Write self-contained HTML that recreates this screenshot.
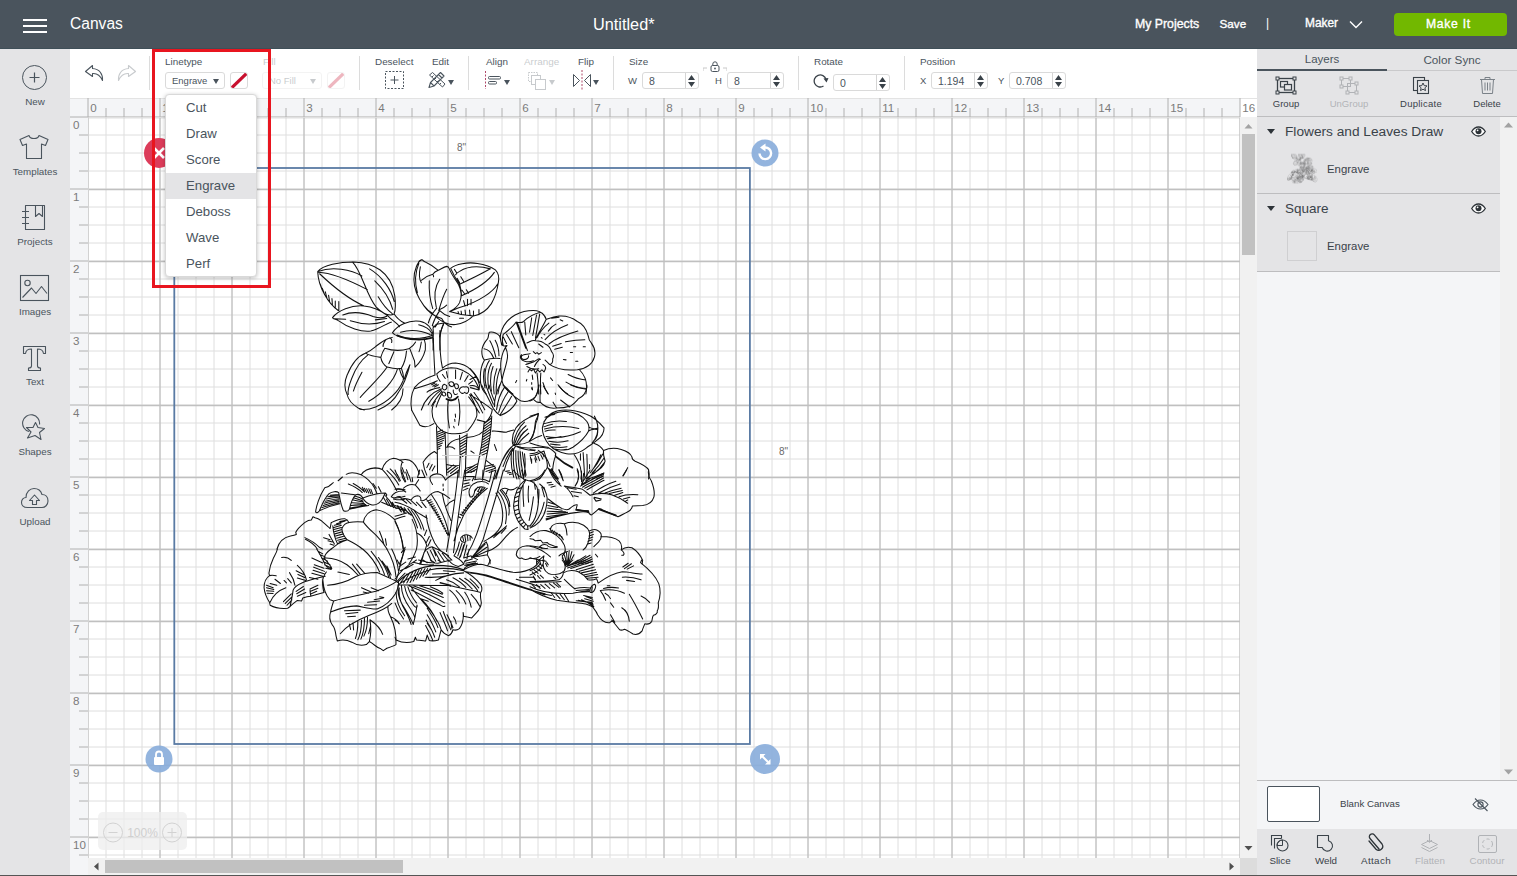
<!DOCTYPE html>
<html lang="en">
<head>
<meta charset="utf-8">
<title>Canvas</title>
<style>
*{box-sizing:border-box;margin:0;padding:0}
html,body{width:1517px;height:876px;overflow:hidden;background:#fff}
body{position:relative;font-family:"Liberation Sans",Arial,sans-serif;color:#3f4850;font-size:11px}
.a{position:absolute}
.t{position:absolute;white-space:nowrap;line-height:1}
.c{transform:translateX(-50%)}
.md{-webkit-text-stroke:.35px #fff}
#topbar{left:0;top:0;width:1517px;height:49px;background:#4a545d;border-bottom:1px solid #3f4f58}
#topbar .t{color:#fff}
#side{left:0;top:49px;width:70px;height:827px;background:#e4e4e6}
#side .t{font-size:10.5px;color:#4a545d;left:35px}
#toolbar{left:70px;top:49px;width:1187px;height:49px;background:#fff}
.lbl{font-size:9.9px;color:#4a545d;top:57px}
.dim{opacity:.3}
.sep{position:absolute;top:56px;width:1px;height:34px;background:#dcdcdc}
.inp{position:absolute;height:17px;border:1px solid #dadada;border-radius:3px;background:#fff;overflow:hidden}
.inp .v{position:absolute;left:6px;top:3px;font-size:10.5px;line-height:1;color:#4a545d}
.inp .s{position:absolute;right:12px;top:0;width:1px;height:15px;background:#d4d4d4}
.inp svg{position:absolute;right:3px;top:2px}
#rpanel{left:1257px;top:49px;width:260px;height:827px;background:#f4f5f7}
</style>
</head>
<body>
<!-- TOP BAR -->
<div id="topbar" class="a">
  <svg class="a" style="left:23px;top:18px" width="24" height="16" viewBox="0 0 24 16"><path d="M0 2h24M0 8h24M0 14h24" stroke="#fff" stroke-width="2.2"/></svg>
  <div class="t" id="tx_canvas" style="left:70px;top:16px;font-size:15.6px">Canvas</div>
  <div class="t" id="tx_untitled" style="left:593px;top:15.5px;font-size:16.3px">Untitled*</div>
  <div class="t md" id="tx_myproj" style="left:1135px;top:17.5px;font-size:12.3px">My Projects</div>
  <div class="t" id="tx_save" style="left:1219.500px;top:18px;font-size:11.7px;-webkit-text-stroke:.35px #fff">Save</div>
  <div class="t" style="left:1266px;top:17px;font-size:12px">|</div>
  <div class="t" id="tx_maker" style="left:1305px;top:18px;font-size:11.9px;-webkit-text-stroke:.35px #fff">Maker</div>
  <svg class="a" style="left:1349px;top:20px" width="14" height="9" viewBox="0 0 14 9"><path d="M1 1.5l6 6 6-6" fill="none" stroke="#fff" stroke-width="1.4"/></svg>
  <div class="a" style="left:1394px;top:13px;width:113px;height:23px;background:#72b800;border-radius:4px"></div>
  <div class="t" id="tx_makeit" style="left:1426px;top:18px;font-size:12.2px;-webkit-text-stroke:.35px #fff;letter-spacing:.7px">Make It</div>
</div>
<!-- LEFT SIDEBAR -->
<div id="side" class="a"></div>
<div id="sideitems">
  <!-- New -->
  <svg class="a" style="left:21px;top:64px" width="27" height="27" viewBox="0 0 27 27"><circle cx="13.5" cy="13.5" r="12" fill="none" stroke="#4a545d" stroke-width="1"/><path d="M13.5 8.5v10M8.5 13.500h10" stroke="#4a545d" stroke-width="1.2"/></svg>
  <div class="t c" style="left:35px;top:96.5px;font-size:9.8px;color:#4a545d">New</div>
  <!-- Templates -->
  <svg class="a" style="left:18px;top:133px" width="32" height="28" viewBox="0 0 32 28"><path d="M11 2.500 L2 6.500 L4.500 12.500 L8.500 11 V25.500 H23.500 V11 L27.500 12.500 L30 6.500 L21 2.500 C20 6.500 12 6.500 11 2.500 Z" fill="none" stroke="#4a545d" stroke-width="1.1" stroke-linejoin="round"/></svg>
  <div class="t c" style="left:35px;top:166.5px;font-size:9.8px;color:#4a545d">Templates</div>
  <!-- Projects -->
  <svg class="a" style="left:19px;top:203px" width="32" height="30" viewBox="0 0 32 30"><path d="M6.500 2.500 H25.500 V26.500 H6.500 Z M3 8.500 h7 M3 14.500 h7 M3 20.500 h7 M16.500 2.500 v11 l3.500 -3 l3.500 3 v-11" fill="none" stroke="#4a545d" stroke-width="1.1" stroke-linejoin="round"/></svg>
  <div class="t c" style="left:35px;top:236.5px;font-size:9.8px;color:#4a545d">Projects</div>
  <!-- Images -->
  <svg class="a" style="left:19px;top:274px" width="32" height="28" viewBox="0 0 32 28"><rect x="1.500" y="1.500" width="28" height="25" fill="none" stroke="#4a545d" stroke-width="1.1"/><circle cx="8.500" cy="9" r="2.700" fill="none" stroke="#4a545d" stroke-width="1.1"/><path d="M3.500 23.500 L12.500 14 L17 19.500 L22.500 12.500 L28 19.500" fill="none" stroke="#4a545d" stroke-width="1.1" stroke-linejoin="round"/></svg>
  <div class="t c" style="left:35px;top:306.5px;font-size:9.8px;color:#4a545d">Images</div>
  <!-- Text -->
  <svg class="a" style="left:21px;top:344px" width="28" height="28" viewBox="0 0 28 28"><path d="M2.500 2.500 H24.500 V9.500 H22.500 C22 6 20.500 5 16.500 5 V22 C16.500 23.500 17.500 24 19.500 24 V26.500 H7.500 V24 C9.500 24 10.500 23.500 10.500 22 V5 C6.500 5 5 6 4.500 9.500 H2.500 Z" fill="none" stroke="#4a545d" stroke-width="1.1" stroke-linejoin="round"/></svg>
  <div class="t c" style="left:35px;top:376.5px;font-size:9.8px;color:#4a545d">Text</div>
  <!-- Shapes -->
  <svg class="a" style="left:21px;top:414px" width="28" height="28" viewBox="0 0 28 28"><path d="M8 17.500 A8.500 8.500 0 1 1 18.500 10.500" fill="none" stroke="#4a545d" stroke-width="1.1"/><path d="M14.500 8.500 L17 13.500 L23.500 14.500 L18.500 18.500 L20 25.500 L14 21.500 L6.500 24 L10 18 L5.500 13.500 L12 13.500 Z" fill="none" stroke="#4a545d" stroke-width="1.1" stroke-linejoin="round"/></svg>
  <div class="t c" style="left:35px;top:446.5px;font-size:9.8px;color:#4a545d">Shapes</div>
  <!-- Upload -->
  <svg class="a" style="left:20px;top:486px" width="30" height="24" viewBox="0 0 30 24"><path d="M7.500 21.500 C3 21.500 1.500 18.500 1.500 16.500 C1.500 13.500 3.500 11.500 6 11.500 C6 6 10 2.500 14 2.500 C18 2.500 21 5 22 8.500 C25.500 8.500 28 11 28 15 C28 19 25 21.500 22 21.500 Z" fill="none" stroke="#4a545d" stroke-width="1.1"/><path d="M14.500 9 L9.500 14.500 H12.500 V18.500 H16.500 V14.500 H19.500 Z" fill="none" stroke="#4a545d" stroke-width="1.1" stroke-linejoin="round"/></svg>
  <div class="t c" style="left:35px;top:516.5px;font-size:9.8px;color:#4a545d">Upload</div>
</div>
<!-- TOOLBAR -->
<div id="toolbar" class="a"></div>
<div id="tb">
  <!-- undo / redo -->
  <svg class="a" style="left:84px;top:64px" width="21" height="18" viewBox="0 0 21 18"><path d="M8.500 1.500 L1.500 7.500 L8.500 12.500 V9.500 C13 9 16 11 18.500 16.500 C19 10 15.500 5 8.500 4.500 Z" fill="none" stroke="#4a545d" stroke-width="1.1" stroke-linejoin="round"/></svg>
  <svg class="a dim" style="left:116px;top:64px" width="21" height="18" viewBox="0 0 21 18"><path d="M12.500 1.500 L19.500 7.500 L12.500 12.500 V9.500 C8 9 5 11 2.500 16.500 C2 10 5.500 5 12.500 4.500 Z" fill="none" stroke="#4a545d" stroke-width="1.1" stroke-linejoin="round"/></svg>
  <div class="sep" style="left:149px"></div>
  <!-- linetype -->
  <div class="t lbl" id="tx_linetype" style="left:165px">Linetype</div>
  <div class="inp" style="left:165px;top:72px;width:60px"><span class="v" id="tx_engrave" style="left:6px;font-size:9.5px;top:3px">Engrave</span>
    <svg style="right:5px;top:6px" width="6" height="5" viewBox="0 0 6 5"><path d="M0 0h6L3 5z" fill="#4a545d"/></svg></div>
  <div class="inp" style="left:230px;top:72px;width:18px"><svg style="left:0;top:0" width="16" height="15" viewBox="0 0 16 15"><path d="M.5 15 L15.500 .5" stroke="#c8102e" stroke-width="3.200"/></svg></div>
  <!-- fill (disabled) -->
  <div class="t lbl dim" style="left:263px">Fill</div>
  <div class="inp dim" style="left:262px;top:72px;width:60px"><span class="v" style="left:6px;font-size:9.5px;top:3px">No Fill</span>
    <svg style="right:5px;top:6px" width="6" height="5" viewBox="0 0 6 5"><path d="M0 0h6L3 5z" fill="#4a545d"/></svg></div>
  <div class="inp dim" style="left:327px;top:72px;width:18px"><svg style="left:0;top:0" width="16" height="15" viewBox="0 0 16 15"><path d="M.5 15 L15.500 .5" stroke="#c8102e" stroke-width="3.200"/></svg></div>
  <div class="sep" style="left:359px"></div>
  <!-- deselect -->
  <div class="t lbl" id="tx_deselect" style="left:375px">Deselect</div>
  <svg class="a" style="left:385px;top:71px" width="19" height="18" viewBox="0 0 19 18"><rect x=".5" y=".5" width="18" height="17" fill="none" stroke="#4a545d" stroke-width="1" stroke-dasharray="2 1.500"/><path d="M9.500 5v8M5.500 9h8" stroke="#4a545d" stroke-width="1"/></svg>
  <!-- edit -->
  <div class="t lbl" id="tx_edit" style="left:432px">Edit</div>
  <svg class="a" style="left:427px;top:71px" width="20" height="18" viewBox="0 0 20 18"><path d="M2 16.500 L3.500 11.500 L13.500 1.500 L17 5 L7 15 Z M3.500 11.500 L7 15 M11.500 3.500 L15 7" fill="none" stroke="#4a545d" stroke-width="1.100" stroke-linejoin="round"/><path d="M2.500 4 L5.500 1.500 L18 13 L15.500 16 Z M5 6 l1.500 -1.500 M7.500 8.500 l1.500 -1.500 M10 11 l1.500 -1.500 M12.500 13.500 l1.500 -1.500" fill="none" stroke="#4a545d" stroke-width="1" stroke-linejoin="round"/></svg>
  <svg class="a" style="left:448px;top:80px" width="6" height="5" viewBox="0 0 6 5"><path d="M0 0h6L3 5z" fill="#4a545d"/></svg>
  <div class="sep" style="left:468px"></div>
  <!-- align -->
  <div class="t lbl" id="tx_align" style="left:486px">Align</div>
  <svg class="a" style="left:484px;top:71px" width="18" height="18" viewBox="0 0 18 18"><path d="M1.500 0v18" stroke="#b04a6a" stroke-width="1" stroke-dasharray="2 1.500"/><rect x="4.500" y="5.500" width="12" height="2.500" rx="1" fill="none" stroke="#4a545d" stroke-width="1"/><rect x="4.500" y="10.500" width="8" height="2.500" rx="1" fill="none" stroke="#4a545d" stroke-width="1"/></svg>
  <svg class="a" style="left:504px;top:80px" width="6" height="5" viewBox="0 0 6 5"><path d="M0 0h6L3 5z" fill="#4a545d"/></svg>
  <!-- arrange -->
  <div class="t lbl dim" id="tx_arrange" style="left:524px">Arrange</div>
  <svg class="a dim" style="left:528px;top:72px" width="20" height="19" viewBox="0 0 20 19"><rect x=".5" y=".5" width="9" height="9" fill="none" stroke="#4a545d" stroke-width="1" stroke-dasharray="1.500 1"/><rect x="3.500" y="3.500" width="9" height="9" fill="#fff" stroke="#4a545d" stroke-width="1"/><rect x="7.500" y="7.500" width="10" height="10" fill="#fff" stroke="#4a545d" stroke-width="1"/></svg>
  <svg class="a dim" style="left:549px;top:80px" width="6" height="5" viewBox="0 0 6 5"><path d="M0 0h6L3 5z" fill="#4a545d"/></svg>
  <!-- flip -->
  <div class="t lbl" id="tx_flip" style="left:578px">Flip</div>
  <svg class="a" style="left:572px;top:70px" width="20" height="20" viewBox="0 0 20 20"><path d="M10 0v20" stroke="#b04a6a" stroke-width="1" stroke-dasharray="2 1.500"/><path d="M1.500 4.500 L7.500 10.500 L1.500 16.500 Z M18.500 4.500 L12.500 10.500 L18.500 16.500 Z" fill="none" stroke="#4a545d" stroke-width="1" stroke-linejoin="round"/></svg>
  <svg class="a" style="left:593px;top:80px" width="6" height="5" viewBox="0 0 6 5"><path d="M0 0h6L3 5z" fill="#4a545d"/></svg>
  <div class="sep" style="left:613px"></div>
  <!-- size -->
  <div class="t lbl" id="tx_size" style="left:629px">Size</div>
  <div class="t" style="left:628px;top:76px;font-size:9.5px;color:#4a545d">W</div>
  <div class="inp" style="left:642px;top:72px;width:57px"><span class="v">8</span><span class="s"></span>
    <svg width="7" height="12" viewBox="0 0 7 12"><path d="M0 5h7L3.500 0zM0 7h7L3.500 12z" fill="#3a4249"/></svg></div>
  <svg class="a" style="left:703px;top:60px" width="24" height="14" viewBox="0 0 24 14"><path d="M0 11 v-3 h4 M24 11 v-3 h-4" fill="none" stroke="#c8c8c8" stroke-width="1"/><rect x="8" y="5.500" width="8" height="6" rx="1.500" fill="#fff" stroke="#4a545d" stroke-width="1"/><path d="M9.800 5.500 v-1.500 a2.200 2.200 0 0 1 4.400 0 v1.500" fill="none" stroke="#4a545d" stroke-width="1"/><circle cx="12" cy="8.500" r=".9" fill="#4a545d"/></svg>
  <div class="t" style="left:715px;top:76px;font-size:9.5px;color:#4a545d">H</div>
  <div class="inp" style="left:727px;top:72px;width:57px"><span class="v">8</span><span class="s"></span>
    <svg width="7" height="12" viewBox="0 0 7 12"><path d="M0 5h7L3.500 0zM0 7h7L3.500 12z" fill="#3a4249"/></svg></div>
  <div class="sep" style="left:798px"></div>
  <!-- rotate -->
  <div class="t lbl" id="tx_rotate" style="left:814px">Rotate</div>
  <svg class="a" style="left:813px;top:73px" width="16" height="15" viewBox="0 0 16 15"><path d="M10.500 13 A6 6 0 1 1 13 6.500" fill="none" stroke="#3a4249" stroke-width="1.300"/><path d="M10.500 5.500 L15.500 5 L13.500 9.500 Z" fill="#3a4249"/></svg>
  <div class="inp" style="left:833px;top:74px;width:57px"><span class="v">0</span><span class="s"></span>
    <svg width="7" height="12" viewBox="0 0 7 12"><path d="M0 5h7L3.500 0zM0 7h7L3.500 12z" fill="#3a4249"/></svg></div>
  <div class="sep" style="left:904px"></div>
  <!-- position -->
  <div class="t lbl" id="tx_position" style="left:920px">Position</div>
  <div class="t" style="left:920px;top:76px;font-size:9.5px;color:#4a545d">X</div>
  <div class="inp" style="left:931px;top:72px;width:57px"><span class="v" id="tx_x">1.194</span><span class="s"></span>
    <svg width="7" height="12" viewBox="0 0 7 12"><path d="M0 5h7L3.500 0zM0 7h7L3.500 12z" fill="#3a4249"/></svg></div>
  <div class="t" style="left:998px;top:76px;font-size:9.5px;color:#4a545d">Y</div>
  <div class="inp" style="left:1009px;top:72px;width:57px"><span class="v">0.708</span><span class="s"></span>
    <svg width="7" height="12" viewBox="0 0 7 12"><path d="M0 5h7L3.500 0zM0 7h7L3.500 12z" fill="#3a4249"/></svg></div>
</div>
<!-- CANVAS -->
<svg class="a" id="cv" style="left:70px;top:98px" width="1187" height="778" viewBox="70 98 1187 778" font-family="Liberation Sans, Arial, sans-serif">
<defs>
<pattern id="gmin" x="87" y="116" width="18" height="18" patternUnits="userSpaceOnUse"><path d="M1 0V18M0 1H18" stroke="#dedede" stroke-width="1" fill="none"/></pattern>
<pattern id="gmaj" x="87" y="116" width="72" height="72" patternUnits="userSpaceOnUse"><path d="M1 0V72" stroke="#b6b6b6" stroke-width="1" fill="none"/><path d="M0 1.600H72" stroke="#c0c0c0" stroke-width="1.500" fill="none"/></pattern>
</defs>
<rect x="70" y="98" width="1187" height="778" fill="#fff"/>
<rect x="88" y="117" width="1152" height="741" fill="url(#gmin)"/>
<rect x="89" y="118" width="1151" height="740" fill="url(#gmaj)"/>
<path d="M70 116.500H1240M88 98V858" stroke="#d2d2d2" stroke-width="2" fill="none"/>
<rect x="70" y="98" width="1170" height="18" fill="#f4f5f7"/>
<rect x="70" y="98" width="18" height="760" fill="#f4f5f7"/>
<path d="M70 98.500H1257" stroke="#e3e3e3" stroke-width="1"/>
<path d="M88 98V117M106 108V117M124 108V117M142 108V117M160 98V117M178 108V117M196 108V117M214 108V117M232 98V117M250 108V117M268 108V117M286 108V117M304 98V117M322 108V117M340 108V117M358 108V117M376 98V117M394 108V117M412 108V117M430 108V117M448 98V117M466 108V117M484 108V117M502 108V117M520 98V117M538 108V117M556 108V117M574 108V117M592 98V117M610 108V117M628 108V117M646 108V117M664 98V117M682 108V117M700 108V117M718 108V117M736 98V117M754 108V117M772 108V117M790 108V117M808 98V117M826 108V117M844 108V117M862 108V117M880 98V117M898 108V117M916 108V117M934 108V117M952 98V117M970 108V117M988 108V117M1006 108V117M1024 98V117M1042 108V117M1060 108V117M1078 108V117M1096 98V117M1114 108V117M1132 108V117M1150 108V117M1168 98V117M1186 108V117M1204 108V117M1222 108V117M1240 98V117M70 117H88M79 135H88M79 153H88M79 171H88M70 189H88M79 207H88M79 225H88M79 243H88M70 261H88M79 279H88M79 297H88M79 315H88M70 333H88M79 351H88M79 369H88M79 387H88M70 405H88M79 423H88M79 441H88M79 459H88M70 477H88M79 495H88M79 513H88M79 531H88M70 549H88M79 567H88M79 585H88M79 603H88M70 621H88M79 639H88M79 657H88M79 675H88M70 693H88M79 711H88M79 729H88M79 747H88M70 765H88M79 783H88M79 801H88M79 819H88M70 837H88M79 855H88" stroke="#b0b0b0" stroke-width="1" fill="none"/>
<g font-size="11.600" fill="#7b7b7b">
<text x="90.2" y="112">0</text>
<text x="162.2" y="112">1</text>
<text x="234.2" y="112">2</text>
<text x="306.2" y="112">3</text>
<text x="378.2" y="112">4</text>
<text x="450.2" y="112">5</text>
<text x="522.2" y="112">6</text>
<text x="594.2" y="112">7</text>
<text x="666.2" y="112">8</text>
<text x="738.2" y="112">9</text>
<text x="810.2" y="112">10</text>
<text x="882.2" y="112">11</text>
<text x="954.2" y="112">12</text>
<text x="1026.2" y="112">13</text>
<text x="1098.2" y="112">14</text>
<text x="1170.2" y="112">15</text>
<text x="1242.2" y="112">16</text>
<text x="73" y="129">0</text>
<text x="73" y="201">1</text>
<text x="73" y="273">2</text>
<text x="73" y="345">3</text>
<text x="73" y="417">4</text>
<text x="73" y="489">5</text>
<text x="73" y="561">6</text>
<text x="73" y="633">7</text>
<text x="73" y="705">8</text>
<text x="73" y="777">9</text>
<text x="73" y="849">10</text>
</g>
<g id="flower" fill="none" stroke="#111" stroke-width="1.05" stroke-linecap="round" stroke-linejoin="round">
<g transform="translate(300,250) scale(0.11416)" stroke-width="9.20">
<path d="M155,188 C200,130 350,105 470,105 C640,110 800,190 830,400 C840,480 832,540 825,560 M155,188 C160,330 250,470 335,530 M158,188 C280,140 450,170 542,228 M162,195 C300,200 480,290 590,347 M172,208 C300,330 450,440 560,490 M460,106 C540,180 580,400 668,500 C720,550 780,585 822,562 M610,165 C720,230 800,350 825,450 M655,270 C740,350 790,440 812,520 M685,410 C720,470 770,530 808,558 M196,352 L176,296 M215,390 L196,336 M236,424 L222,366 M260,457 L250,396 M284,485 L280,426 M309,510 L309,448 M340,530 L340,452 M285,592 C330,530 450,480 560,490 C620,495 690,515 770,577 M285,592 C290,612 320,600 332,616 C420,680 540,722 620,710 C700,690 760,640 800,632 M375,570 C470,530 560,550 640,582 C700,600 740,592 760,580 M440,620 C540,652 640,660 740,626 M660,612 L760,600 M300,602 L400,606 M825,560 C850,600 880,622 915,640 M772,580 C800,612 850,640 872,672 M810,725 C850,660 950,612 1050,625 C1120,640 1160,690 1165,745 M810,725 C830,750 900,772 1000,776 C1080,776 1130,762 1165,745 M880,720 C950,700 1050,700 1140,740 M1040,655 C1100,670 1140,700 1155,730 M1165,682 L1196,650 L1262,640 M1165,682 C1172,720 1166,760 1166,800 L1166,876 M1262,640 C1240,680 1222,720 1226,800 L1226,876"/>
<path stroke-width="15.77" d="M850,748 C950,792 1080,792 1150,770"/>
</g>
<g transform="translate(400,250) scale(0.09932)" stroke-width="10.57">
<path d="M222,98 C180,110 140,200 140,300 C140,400 180,480 240,560 C270,600 300,625 330,640 M190,135 C150,230 150,340 175,430 M205,170 C190,240 195,300 215,330 M185,125 C195,105 215,95 225,100 C240,120 255,118 265,125 C310,145 350,175 385,205 C410,195 440,170 470,165 C485,165 492,175 497,190 M497,190 C520,250 560,300 590,350 C615,400 625,470 600,530 C580,570 540,600 500,620 M385,205 C360,215 340,230 330,245 C335,255 340,262 338,270 M330,245 C290,255 250,275 215,305 M295,310 C290,400 300,500 330,590 M400,295 C350,370 340,470 365,575 M470,395 C430,470 410,540 390,610 M400,600 C430,590 450,575 470,555 M400,610 C430,640 460,660 500,670 M285,735 C300,680 330,630 370,585 M325,760 C345,700 370,650 400,610 M330,765 L355,775 L390,720 M240,560 C280,620 350,670 420,690 M370,680 C420,720 480,760 560,750 C640,740 700,700 740,660 M420,690 C440,730 470,760 520,775 M440,740 C420,790 405,830 400,876 M510,185 C560,140 680,120 780,135 C850,145 920,170 960,200 C990,230 1000,280 990,330 C980,400 960,470 920,540 C880,600 820,650 740,665 M910,190 C800,160 680,165 600,215 C580,225 565,240 560,250 M905,192 C820,240 720,290 600,345 M950,225 C900,300 800,380 620,460 M985,340 C940,420 800,520 600,580 C560,595 530,610 500,620 M500,620 C560,640 640,660 740,665 M510,185 C530,230 560,290 600,345 C610,380 620,420 620,460 M548,195 L570,230 M575,285 L600,330 M612,270 L640,315 M625,405 L650,440 M668,400 L690,435 M640,510 L655,565 M680,495 L680,560 M715,495 L715,550 M585,620 L590,640 M615,615 L620,645 M655,605 L660,650 M700,605 L705,655 M740,615 L740,660 M795,600 L795,640 M600,688 L640,688"/>
</g>
<g transform="translate(330,310) scale(0.11416)" stroke-width="9.20">
<path d="M545,240 C480,250 440,290 400,320 C370,345 340,365 310,378 M310,378 C350,400 400,410 445,415 M490,260 C470,290 460,300 465,320 M480,335 C540,355 620,360 690,340 C720,320 740,300 750,280 M520,245 C540,250 545,265 540,285 M445,415 C450,445 470,480 500,500 C540,510 590,520 625,510 C650,470 665,420 670,360 M445,415 C455,380 470,350 480,335 M560,365 C545,400 530,440 515,470 M700,340 C715,380 730,420 740,445 L745,500 M745,500 C790,460 820,410 835,350 C840,310 835,280 825,255 M800,280 C795,310 790,340 780,365 M310,378 C250,400 190,470 150,570 C120,640 130,700 150,740 C160,790 200,830 250,860 L300,876 M330,395 C270,440 220,520 190,600 C170,650 150,700 160,740 M280,545 C250,600 220,660 205,710 M500,500 C450,580 340,680 265,765 M590,520 C560,620 460,730 340,800 M625,510 C640,550 650,590 640,620 C600,720 500,810 400,850 C350,870 300,876 260,870 M610,520 C620,560 635,590 650,605 M650,605 C660,570 680,520 700,480 M700,480 C680,560 650,650 600,720 M640,690 C640,760 600,830 540,876 M600,720 C560,800 480,850 420,876 M905,250 C910,400 915,500 920,570 M963,180 C960,300 965,420 985,510 M890,215 C900,240 905,260 905,290 M985,510 C1020,480 1060,465 1100,465 C1160,470 1200,490 1230,520 C1270,560 1300,610 1310,660 L1305,700 M935,560 C960,530 1000,510 1060,505 C1140,505 1200,540 1250,590 C1280,630 1300,670 1305,700 M935,560 C940,590 950,610 965,625 M1305,700 L1230,680 M1020,540 L1030,590 M1100,525 L1100,600 M1160,545 L1140,610 M1210,575 L1180,625 M1250,620 L1215,650 M985,565 L1010,600 M920,570 C860,590 780,630 740,680 C710,740 705,820 715,876 M740,690 C810,670 880,650 940,620 M975,690 C900,720 830,780 800,876 M960,680 C900,690 870,700 850,720 M975,700 C920,740 880,790 860,830 M980,710 C940,760 910,800 890,840 M985,720 C960,770 940,810 930,850 M890,655 L920,640 M900,668 L935,648 M915,675 L950,655 M1000,650 C980,660 975,690 1000,700 C1020,700 1030,680 1020,660 Z M1040,640 C1060,620 1090,630 1085,660 C1070,680 1045,670 1040,640 M1090,650 C1110,640 1130,650 1125,680 C1110,700 1090,690 1090,650 M985,720 C975,740 990,760 1010,750 C1020,730 1005,715 985,720 M1030,720 C1020,750 1040,780 1060,770 C1075,750 1060,720 1030,720 M1080,700 C1075,730 1095,750 1115,735 M1130,700 C1140,730 1165,740 1180,720 C1195,740 1215,730 1215,700 C1220,680 1200,665 1180,675 C1160,665 1140,680 1130,700"/>
<path stroke-width="15.77" d="M1020,780 C1050,800 1100,790 1120,760"/>
</g>
<g transform="translate(470,300) scale(0.10731)" stroke-width="9.79">
<path d="M285,320 C300,250 350,180 420,140 C480,110 560,95 620,100 C660,105 690,130 710,180 M430,205 C450,210 480,215 500,200 C540,160 600,130 655,115 C680,125 700,150 710,180 M285,320 C280,350 285,390 300,420 C310,430 330,430 345,425 M430,205 C400,250 360,280 310,320 C300,350 300,390 310,420 M430,208 L520,450 M442,212 L535,470 M385,295 L455,445 M340,320 L395,410 M310,345 L340,405 M510,205 L520,325 M575,165 L555,300 M620,140 L585,330 M650,130 L610,355 M710,180 C690,230 640,300 610,370 M710,180 C740,170 780,155 830,150 C900,145 960,170 1000,200 C1050,220 1080,260 1100,330 C1105,360 1110,380 1130,400 C1160,440 1170,490 1160,530 C1140,600 1080,640 1000,650 C900,660 800,640 740,600 M735,215 C690,250 650,300 625,350 M800,225 C770,240 745,265 730,290 M910,230 C830,260 750,310 700,370 M1005,290 C900,320 800,360 735,410 M1070,370 C1000,370 940,380 890,390 M850,405 L770,430 M860,440 L790,460 M760,170 L830,160 M840,185 L865,195 M965,435 L985,435 M1055,435 L1075,435 M935,490 L955,490 M870,555 L895,558 M985,570 L1005,570 M690,322 L698,325 M665,350 L672,356 M530,400 C560,390 580,370 610,380 C650,380 680,390 700,410 C730,420 750,450 760,480 C780,500 780,530 770,550 C775,580 760,600 740,600 C730,590 710,570 700,560 M640,410 L680,440 M590,480 L610,500 L625,490 L640,505 L665,490 M560,500 C540,510 520,500 500,510 C470,520 470,550 500,555 C530,555 550,540 545,520 M480,510 C460,530 470,560 510,570 C540,580 570,575 590,565 M520,600 C550,590 590,585 620,560 C640,545 650,545 655,555 M600,620 C610,590 630,570 650,550 M530,620 C560,640 600,650 640,640 M540,670 L555,645 L575,660 L590,640 L610,680 L630,650 L650,670 L670,650 L690,670 L700,650 M680,600 C700,610 710,630 700,650 M625,680 C630,740 640,800 640,876 M660,680 C655,740 655,800 660,876 M1020,650 C1070,700 1100,780 1080,876 M915,695 C960,720 1020,740 1080,745 M895,765 C950,800 1020,820 1085,825 M820,790 C850,830 880,860 910,876 M680,770 C690,810 710,850 730,876 M750,725 L770,750 M425,770 L435,750 M525,755 L530,740 M580,700 L585,740 M575,770 L575,785 M575,820 L580,835 M345,425 C320,450 300,500 290,560 C280,620 290,700 300,760 C310,800 350,850 400,876 M330,440 C350,480 355,520 345,560 C335,620 310,680 300,740 M300,740 C280,780 265,830 260,876 M180,300 C170,320 175,340 165,360 C130,400 110,440 110,480 C110,520 120,545 135,560 M180,300 C210,295 250,310 275,335 C285,360 290,390 295,420 M185,380 C210,420 225,470 240,530 M235,375 C260,420 270,470 270,520 M130,455 C170,460 200,490 220,540 M135,560 C180,545 230,540 280,545 M135,560 C100,620 90,700 100,780 C110,830 130,860 150,876 M180,565 C140,620 130,700 150,800 M200,590 C165,650 160,740 175,830 M215,620 C190,680 185,760 200,850 M250,640 C220,720 215,800 225,876 M280,640 C250,720 240,800 245,876 M135,640 C120,700 125,760 140,820 M0,640 C40,680 70,720 90,770 M0,740 L60,710 M0,800 C30,790 60,800 85,830"/>
</g>
<g transform="translate(400,385) scale(0.10731)" stroke-width="9.79">
<path d="M108,233 L185,375 C230,400 280,385 315,360 M330,150 C290,200 290,280 320,340 C350,400 400,440 450,450 C520,460 590,450 630,430 C670,380 700,340 715,290 C725,230 700,170 650,90 M450,140 C440,220 445,320 460,400 M545,130 C565,220 560,300 545,375 M515,270 L518,300 M510,320 L512,340 M500,385 L505,400 M650,90 C720,130 800,180 860,230 C855,270 840,310 800,345 L720,325 M660,80 C700,130 740,190 770,260 M690,70 C730,120 760,170 790,230 M640,110 C680,160 710,210 740,260 M340,390 C345,500 350,650 350,820 M420,440 C425,560 430,700 435,840 M345,440 L395,420 M347,460 L410,435 M348,480 L415,452 M349,500 L415,472 M350,520 L412,494 M350,540 L405,516 M351,560 L395,540 M352,580 L385,564 M352,600 L372,590 M435,740 C470,750 510,755 545,750 M440,790 L500,745 M445,815 L525,755 M470,825 L540,770 M500,830 L545,795 M555,468 L560,690 L548,860 M625,455 L612,700 L608,876 M560,500 L615,470 M560,525 L620,490 M561,550 L620,515 M562,575 L618,540 M562,600 L616,567 M563,625 L614,595 M563,650 L612,622 M562,675 L600,655 M615,775 C650,770 690,755 720,735 M615,800 L700,745 M625,815 L715,760 M660,815 L720,780 M785,345 L760,560 L700,876 M855,290 C850,420 830,560 800,700 L770,876 M785,360 L850,310 M783,385 L852,335 M780,410 L852,360 M778,435 L850,385 M775,460 L848,410 M772,485 L846,436 M770,510 L843,462 M767,535 L840,490 M765,560 L836,515 M760,585 L830,545 M758,610 L822,575 M755,635 L815,605 M750,660 L808,635 M800,700 L890,770 M790,760 L870,740 M790,785 L885,755 M800,805 L890,775 M830,815 L890,795 M1060,560 C1000,600 960,680 930,760 C910,820 900,850 895,876 M1040,580 C980,640 930,740 880,876 M1075,575 C1020,640 990,720 970,800 M1050,590 C1010,640 980,700 960,760 M435,580 C470,570 495,580 510,595 M440,575 C460,530 500,510 555,500 M625,490 C670,485 710,475 740,460 C760,440 780,430 800,425 M860,430 C900,425 950,440 990,440 C1020,430 1040,425 1060,420 M660,615 L690,635 M880,555 L900,610 M1285,270 C1200,300 1120,340 1080,400 C1050,450 1040,500 1050,550 M1285,270 C1290,300 1280,330 1265,360 C1260,420 1240,480 1200,530 C1160,550 1100,560 1050,550 M1060,540 C1070,470 1100,400 1160,345 M1070,545 C1090,480 1120,420 1175,380 M1085,550 C1105,500 1140,450 1190,410 M1100,550 C1130,510 1160,480 1200,450 M1120,480 C1140,450 1160,430 1180,420 M1050,560 C1100,580 1160,590 1230,585 C1290,575 1340,580 1380,590 M1200,530 C1240,500 1280,480 1320,470 M1090,575 C1150,600 1220,610 1260,605 M1060,600 C1050,700 1060,800 1090,876 M1080,610 C1075,700 1090,800 1110,876 M1100,615 C1100,700 1110,790 1130,860 M1120,620 C1125,700 1135,780 1150,850 M1140,625 C1150,700 1160,770 1175,840 M1040,620 C1030,700 1040,790 1060,860 M1160,640 C1170,720 1170,800 1150,876 M1215,670 L1225,720 M1260,660 L1275,700 M1290,610 C1340,640 1380,700 1398,760 M985,805 L1020,800 M1000,820 L1035,815 M1020,835 L1045,830 M760,0 C790,60 830,140 870,220 C890,250 910,270 935,285 M935,285 C1000,260 1060,210 1090,150 C1070,100 1020,50 960,0 M880,200 C880,130 900,60 930,0 M900,230 C910,150 940,70 975,20 M920,255 C940,180 975,110 1010,60 M935,275 C970,220 1010,160 1040,105 M800,0 C820,60 845,120 870,180 M830,0 C840,50 860,100 880,150 M960,0 C1010,60 1070,120 1130,150 C1180,160 1230,140 1260,110 C1280,80 1290,40 1290,0 M1230,20 L1235,45 M215,720 C240,680 280,640 320,620 L345,640 M0,700 C40,690 90,690 120,720 C150,750 170,790 180,830 M215,720 C220,760 230,800 250,840 M270,730 L250,770 M300,740 L275,790 M325,755 L300,800 M20,770 L40,820 M60,790 L80,840"/>
</g>
<g transform="translate(530,385) scale(0.10731)" stroke-width="9.79">
<path d="M100,0 C95,60 90,120 95,160 C130,200 180,220 240,215 C300,215 350,205 380,195 C420,170 440,140 455,125 C490,110 520,80 530,20 L530,0 M0,150 C40,140 75,90 85,0 M40,140 C60,160 80,165 95,160 M125,10 L165,80 M235,75 L238,88 M215,160 L245,210 M285,140 L370,205 M270,10 C310,60 360,100 410,120 M380,0 C420,20 470,35 525,40 M115,400 C130,320 180,260 260,240 C340,225 440,240 520,270 C580,290 640,340 690,400 C690,440 670,480 630,510 C600,540 560,560 520,590 C470,630 400,650 340,640 C280,630 220,600 180,560 C140,510 115,450 115,400 M130,340 C170,280 240,250 330,245 C420,250 490,290 530,340 C550,370 555,400 545,430 C520,480 470,530 400,580 C370,600 340,610 300,605 M545,430 C570,410 600,410 630,415 M555,395 C580,410 610,410 635,400 M600,290 C630,340 640,400 625,460 C615,490 600,520 580,540 M630,415 C635,450 625,480 610,505 M140,300 C170,285 200,275 230,275 M135,360 C200,335 270,330 340,340 M130,390 C160,375 185,368 210,365 M135,410 C230,385 350,380 455,405 M140,430 C170,420 200,418 235,420 M150,480 C250,500 370,480 470,435 M160,500 C200,495 250,490 290,480 M175,525 C230,535 300,535 355,520 M190,550 C220,555 250,558 280,560 M200,575 C250,585 300,585 345,575 M215,595 C250,605 300,608 340,600 M0,292 L80,266 C75,300 55,320 50,345 C45,400 40,440 25,480 L0,520 M0,540 C60,560 110,575 165,580 M0,600 L45,612 M0,640 C30,640 55,635 75,625 M0,660 C40,655 90,640 130,615 M15,690 L15,730 M45,680 L55,720 M75,665 L90,705 M100,650 L120,690 M120,640 L130,670 M130,615 C150,680 170,730 160,770 L210,800 M165,580 C200,600 230,620 240,640 L235,660 M240,660 C220,700 215,740 210,800 M160,770 C140,810 110,850 90,876 M165,770 L240,876 M185,790 L255,876 M200,780 L265,876 M270,790 C290,820 300,850 305,876 M410,645 C440,690 460,730 470,770 C480,810 480,850 475,876 M440,780 C455,810 455,850 450,876 M470,640 L470,700 M495,630 C500,700 505,780 510,860 M530,645 C535,720 535,790 530,860 M555,740 L555,780 M600,545 C640,560 670,585 685,610 M685,610 C680,650 690,680 700,710 C690,760 640,800 580,830 C560,850 540,865 520,876 M680,640 C650,700 610,760 560,820 M690,680 C660,730 620,780 580,820 M695,720 C670,760 630,800 590,830 M660,650 C640,700 615,740 590,780 M690,820 C640,840 590,860 540,876 M685,835 C650,850 610,865 580,876 M680,850 L620,876 M685,610 C740,585 800,585 850,600 C900,615 940,640 950,670 C950,690 960,700 980,710 C1040,735 1090,760 1105,790 C1115,820 1110,850 1105,876 M910,770 L870,845"/>
<path stroke-width="16.77" d="M245,670 C290,710 340,745 395,770"/>
</g>
<g transform="translate(255,455) scale(0.10731)" stroke-width="9.79">
<path d="M565,530 C570,480 600,380 650,305 C665,300 680,300 690,290 C700,280 715,270 730,258 M775,240 L815,205 M850,180 C880,160 930,160 990,185 C1040,210 1080,250 1110,300 C1120,320 1130,340 1135,355 M565,530 C575,545 590,535 600,520 C620,470 650,400 690,360 C720,340 760,335 780,350 C790,400 800,470 825,520 C850,530 870,520 880,505 C890,460 910,400 940,370 C970,360 990,375 1005,400 C1020,430 1050,455 1090,465 C1130,470 1160,450 1180,420 C1195,395 1205,370 1215,355 M600,520 C660,490 720,470 790,455 M880,505 C930,495 990,480 1060,470 M805,355 C850,360 900,365 935,372 M1005,400 C1060,380 1140,355 1215,355 C1225,360 1230,370 1225,380 M625,490 C680,470 730,455 785,445 M635,470 C690,450 740,440 785,432 M645,450 C700,435 745,425 783,420 M655,430 C700,418 745,410 782,407 M665,410 C710,400 750,395 781,394 M680,390 C715,385 750,380 780,381 M700,375 L778,368 M885,495 C940,485 990,475 1040,468 M895,470 C940,465 990,465 1030,462 M905,445 C940,445 985,450 1020,452 M915,420 C945,425 985,435 1012,440 M925,400 C950,408 985,420 1006,428 M935,385 C955,390 985,400 1003,412 M870,270 C920,290 970,320 1000,350 M915,265 C960,290 1000,320 1020,345 M1000,300 L1020,340 M1020,310 L1040,350 M1040,315 L1060,355 M1060,315 L1080,360 M1080,320 L1095,360 M1100,265 L1130,310 M1150,295 L1175,345 M990,185 C1010,150 1060,125 1120,120 C1150,120 1170,125 1185,135 M1185,135 C1200,80 1240,35 1290,30 C1330,35 1360,50 1380,70 M1185,135 C1230,180 1280,250 1320,330 M1230,145 C1280,190 1320,240 1340,280 M1260,130 C1300,170 1330,210 1345,245 M1370,70 C1350,120 1360,200 1398,250 M1270,390 C1290,350 1330,335 1380,335 M1270,390 C1300,410 1350,400 1398,385 M1320,320 C1350,315 1380,320 1398,325 M1215,380 L1290,470 M1200,400 L1240,470 M1225,410 L1265,480 M1250,420 L1290,490 M1280,440 L1315,500 M1330,470 L1360,520 M1360,480 L1390,540 M1180,440 C1240,470 1320,490 1398,520 M1290,410 C1330,420 1370,420 1398,410 M205,876 C220,820 260,770 330,755 C350,750 370,745 385,740 L380,720 C400,680 440,650 470,625 C490,610 510,605 525,605 L540,575 L560,585 C580,590 600,600 615,610 C650,640 680,665 700,685 L710,630 M710,630 C750,610 800,590 840,595 C860,605 870,615 875,630 M875,630 C850,635 825,650 810,685 C810,720 830,760 860,790 M875,630 C920,620 970,620 1010,625 M740,655 L800,640 M735,675 L805,655 M735,695 L805,675 M740,715 L810,695 M745,735 L815,715 M750,755 L825,735 M760,775 L835,755 M770,795 L845,775 M780,810 L855,790 M760,640 L840,615 M790,620 L860,605 M725,660 C730,720 745,780 770,830 M770,830 C800,815 830,800 860,790 M860,790 C900,810 960,840 1000,876 M770,830 C750,845 730,860 710,876 M1010,625 C1020,570 1060,520 1130,510 C1200,520 1260,560 1300,600 C1340,680 1370,770 1380,876 M1010,625 C1050,680 1100,720 1140,760 C1180,800 1210,840 1230,876 M1300,600 C1330,590 1370,575 1398,570 M1160,710 C1180,760 1195,800 1200,830 M1215,780 L1225,840 M465,770 C510,790 560,820 600,860 L630,876 M470,785 C520,810 560,840 580,876 M640,770 L700,790 M690,740 L740,830 M680,800 L720,810 M700,830 L735,840"/>
</g>
<g transform="translate(395,470) scale(0.10731)" stroke-width="9.79">
<path d="M590,0 C570,200 530,500 480,760 M650,0 C620,200 580,500 545,770 M940,0 C900,150 830,400 760,600 C730,680 700,740 670,790 M1010,0 C960,200 880,450 820,650 C790,720 760,770 720,810 M820,0 L815,95 M905,0 L880,110 M655,30 L740,10 M650,60 L740,60 L720,100 M645,100 L700,90 M640,130 L690,120 M640,160 C660,150 680,145 700,140 M635,190 L680,170 M700,250 C680,210 690,160 730,130 C780,100 840,100 870,130 M740,210 C740,170 780,150 830,160 M700,250 C715,255 730,250 740,210 M750,190 L770,160 M770,200 L795,160 M795,195 L815,165 M820,185 L840,165 M740,90 C790,80 850,90 880,110 M860,170 C780,230 700,320 640,420 C600,500 570,580 550,660 M835,170 C760,230 680,320 620,420 M800,215 L778,203 M783,236 L761,224 M765,257 L743,245 M748,278 L726,266 M731,299 L709,287 M714,320 L692,308 M696,340 L674,328 M679,361 L657,349 M662,382 L640,370 M645,403 L623,391 M627,424 L605,412 M610,445 L588,433 M290,270 C320,230 360,200 400,200 C440,215 480,240 510,265 M290,270 C340,330 400,420 440,500 C460,540 480,580 495,610 M340,230 C390,300 440,400 470,480 C485,520 495,560 500,600 M440,220 C450,280 470,350 500,420 C510,440 515,455 520,470 M480,335 C500,310 520,290 550,280 M300,290 L336,277 M312,308 L346,296 M324,326 L356,315 M336,344 L367,333 M348,362 L377,352 M360,380 L387,371 M372,400 L397,391 M384,420 L407,412 M396,440 L418,432 M408,460 L428,453 M420,480 L438,474 M432,502 L448,496 M444,524 L458,519 M456,548 L469,544 M468,570 L479,566 M480,592 L489,589 M448,130 L448,150 M450,175 L450,190 M0,180 C30,170 70,180 100,205 M80,170 C110,140 150,130 190,140 C210,160 225,180 235,195 M190,140 C200,120 215,100 220,90 M330,60 C360,30 410,30 440,50 C455,65 465,80 470,95 M330,60 C320,80 330,110 350,135 M470,95 C490,70 520,50 560,30 L590,20 M230,0 L210,70 L280,70 L250,0 M20,40 L50,100 M60,0 C70,40 90,80 100,110 M100,20 L120,90 M130,50 L150,110 M160,70 L165,110 M0,0 C10,30 20,50 35,70 M0,260 C20,250 40,245 50,250 L60,270 C90,260 120,265 150,280 C160,260 180,245 210,240 C235,240 245,260 240,285 C260,290 280,280 290,270 M0,300 C60,310 130,340 200,390 C250,420 280,440 300,450 M0,330 C50,340 100,370 150,420 M20,340 L60,390 M50,345 L95,400 M85,350 L130,410 M120,360 C160,410 190,470 210,540 M150,370 C190,420 225,480 245,550 M180,380 C220,430 250,490 270,560 M60,270 L110,310 M100,270 L150,315 M150,285 L200,330 M200,300 L250,350 M250,300 L290,350 M290,420 C300,500 330,600 370,680 C400,730 440,770 480,790 M295,560 L275,610 M320,620 L290,680 M335,650 L305,710 M0,430 C40,420 80,410 110,400 M0,480 C40,560 70,650 80,740 C80,790 60,840 40,876 M160,460 C200,540 220,640 200,740 C180,800 150,850 130,876 M210,590 C250,610 280,650 295,700 C280,760 250,820 230,876 M95,720 L60,770 M120,830 L190,810 M270,770 C290,740 320,720 345,715 C360,740 370,770 380,800 M345,715 C400,740 460,770 500,800 M300,760 L340,850 M330,750 L380,850 M365,745 L420,850 M400,760 L460,850 M440,775 L500,850 M480,790 L530,840 M270,770 C260,810 250,850 240,876 M610,650 C610,620 640,600 680,605 C700,610 715,620 720,635 M610,650 C620,670 640,675 655,670 M630,620 L640,660 M650,610 L660,665 M675,610 L680,660 M700,615 L700,655 M600,670 C590,720 570,770 550,800 M655,670 C640,730 620,780 600,820 M625,680 L585,800 M640,700 L610,810 M670,700 L640,820 M690,740 L670,830 M640,820 L710,800 L720,830 L650,850 M550,800 C580,820 620,840 640,876 M720,810 C760,760 810,700 850,670 C870,700 870,750 860,790 C820,800 770,810 720,810 M725,805 L840,690 M730,808 L855,720 M735,810 L860,755 M860,790 C880,820 890,850 885,876 M720,810 C740,820 760,830 770,835 M980,190 C1000,170 1030,165 1055,180 C1040,200 1035,210 1040,220 M940,215 C1000,300 1020,420 990,520 C960,580 900,630 830,665 M960,200 C1030,290 1050,400 1030,500 M985,195 C1050,270 1075,350 1060,420 M1000,190 C1050,240 1070,290 1070,340 M1040,520 C990,570 930,610 870,640 M1035,540 L990,590 M1000,560 L920,630 M1055,180 C1080,190 1110,185 1140,160 M1215,90 C1150,140 1110,230 1105,330 C1110,420 1150,500 1210,550 L1240,555 M1215,90 C1240,100 1270,105 1300,100 C1340,90 1370,60 1385,30 M1240,555 L1235,520 C1180,470 1150,400 1150,320 C1150,230 1180,150 1215,100 M1240,520 L1275,525 C1330,470 1370,390 1390,300 M1195,130 C1190,200 1195,280 1200,340 M1245,150 C1240,200 1240,260 1245,300 M1290,250 C1280,330 1265,410 1250,470 M1340,180 C1345,220 1340,260 1335,300 M1125,220 L1165,200 M1115,260 L1158,240 M1110,300 L1152,285 M1108,340 L1150,325 M1112,380 L1152,365 M1120,420 L1160,400 M1135,455 L1170,435 M1150,485 L1185,462 M1170,510 L1200,488 M1195,535 L1215,510 M1140,180 L1175,165 M1100,0 C1130,40 1170,70 1215,90 M1180,0 L1200,85 M1210,0 L1215,60 M1140,535 C1080,560 1040,610 1000,660 C960,710 910,740 870,755 M1130,790 C1130,740 1170,710 1230,705 C1290,705 1340,715 1370,730 M1130,790 C1140,820 1160,830 1180,820 C1200,840 1240,835 1260,820 C1290,830 1330,820 1350,805 M1320,830 L1320,876 M1350,840 L1355,876"/>
</g>
<g transform="translate(530,470) scale(0.10731)" stroke-width="9.79">
<path d="M1105,0 C1100,30 1105,70 1130,100 C1150,150 1165,200 1155,250 C1140,300 1100,325 1050,330 L955,335 C950,360 930,385 900,395 C870,410 850,425 820,435 M820,435 C790,420 760,410 740,400 C700,385 670,365 645,360 C625,375 600,400 570,420 C555,415 545,395 545,380 C500,380 460,375 430,365 L440,325 C420,320 400,335 375,355 C365,370 340,375 300,360 C260,340 220,310 170,270 M150,465 C250,430 350,405 440,395 C480,388 520,388 550,398 M170,300 L230,320 M165,330 L260,350 M165,355 L300,375 M160,385 L330,390 M160,410 L350,395 M155,435 L330,410 M150,455 L250,430 M320,150 C350,170 380,210 400,250 M320,150 C380,160 440,165 490,180 C520,200 540,220 560,235 M560,235 C620,215 700,215 760,230 C820,250 870,280 910,310 M350,165 L430,180 M385,200 L480,215 M410,240 L450,250 M470,150 C540,110 610,70 685,30 M490,160 C560,120 620,90 685,55 M510,170 C570,140 630,110 685,75 M530,185 C590,150 640,120 690,95 M480,140 L560,80 M590,215 C650,170 720,130 800,105 M640,215 C700,180 770,150 840,130 M700,215 C750,195 800,180 850,170 M740,220 L860,190 M790,235 L865,210 M830,250 C880,230 940,225 1005,230 M870,270 L930,255 M890,290 L910,280 M595,260 L615,290 L660,280 M600,255 L665,270 M0,100 C60,90 110,60 140,0 M180,0 C200,50 240,110 290,150 M200,0 C220,40 250,90 280,130 M270,0 L310,100 M160,120 L200,115 M175,140 L215,135 M195,160 L235,150 M440,0 C460,50 450,110 420,150 M480,10 L480,110 M500,30 L490,120 M560,0 L480,130 M610,0 L520,100 M865,55 L900,0 M0,100 C30,110 50,130 65,160 C90,250 80,350 50,440 C40,470 20,500 0,520 M40,120 L50,180 M70,200 L80,300 M90,130 C120,150 150,200 160,260 C160,350 130,430 90,480 C60,510 30,530 0,540 M110,160 L135,250 M130,160 L150,220 M190,550 C200,510 250,490 320,500 C340,540 345,580 345,605 M320,500 C380,480 450,485 500,515 C530,535 545,555 550,570 M550,570 C590,545 630,550 660,590 C670,620 660,650 640,670 L595,715 M550,570 C560,600 555,640 540,680 C530,710 510,735 495,745 M555,590 L590,575 M550,615 L590,600 M545,640 L585,625 M540,665 L580,650 M538,690 L570,680 M660,620 C720,620 790,630 830,660 C850,680 860,710 850,745 M850,745 C880,720 920,715 950,725 C990,750 1030,800 1050,840 L1045,876 M850,745 C870,760 885,780 870,795 L855,795 M185,545 L200,575 M205,560 L225,590 M225,570 L250,600 M250,585 L275,615 M275,600 L300,635 M295,620 L310,650 M0,620 C40,580 100,560 150,565 C220,580 290,630 320,700 C335,740 325,780 300,800 M0,640 L30,645 L50,660 L100,655 L120,680 L160,675 L175,690 L230,710 L255,715 M90,715 C110,695 140,690 160,700 C170,720 200,725 255,720 M90,715 C110,730 140,735 165,730 M0,710 C50,720 100,740 140,770 C170,790 180,800 190,810 M0,820 C50,830 100,840 150,850 M60,860 L130,800 L120,850 M270,800 C290,780 320,770 350,760 M300,800 C310,830 320,860 330,876 M350,876 L340,770 M355,876 L365,750 M360,876 L390,760 M365,876 L410,790 M345,876 L320,790 M340,876 L300,820 M400,876 L520,800 M420,876 L560,795 M450,876 L575,810 M480,876 L580,830 M520,876 L580,850 M610,785 L630,810"/>
<path stroke-width="16.77" d="M430,372 L540,386 M640,366 L800,422"/>
</g>
<g transform="translate(255,549) scale(0.12100)" stroke-width="8.68">
<path d="M185,0 C180,30 160,60 150,80 C130,120 120,160 115,200 L120,220 C90,240 75,280 75,320 C80,370 100,410 120,440 L125,465 C160,485 210,495 270,490 L290,475 M120,220 C140,215 160,218 175,222 M290,475 C310,455 330,440 350,425 L385,430 L395,405 C420,395 440,390 460,390 M460,390 C500,380 540,365 570,360 M570,360 C560,320 555,280 560,250 C570,220 580,200 590,190 M125,440 C150,380 200,340 255,320 M290,475 C300,430 310,380 315,340 C330,300 370,290 410,270 C470,250 530,235 580,225 M285,195 C310,230 325,265 330,300 M350,135 C390,170 415,210 425,255 M220,70 C250,65 280,75 300,95 M165,250 L210,285 M240,260 L260,280 M270,245 L300,280 M95,300 L150,320 M95,320 L155,335 M95,345 L155,350 M100,365 L150,368 M125,285 L180,300 M340,180 L400,210 M355,210 L410,235 M350,240 L420,260 M490,130 L570,160 M485,150 L575,185 M480,175 L570,205 M470,200 L560,225 M450,235 L520,250 M470,75 L560,115 M235,435 L300,370 M250,450 L305,395 M265,465 L305,420 M340,350 L400,310 M345,370 L410,330 M350,390 L420,360 M455,330 L520,300 M460,350 L520,325 M465,370 L510,350 M455,340 C455,360 460,380 462,390 M510,0 C540,50 570,100 580,130 C600,160 625,170 635,160 C620,130 590,100 570,75 C580,40 600,20 630,0 M525,20 L560,40 M535,45 L580,65 M550,75 L600,100 M565,105 L620,130 M575,130 L625,155 M585,160 L630,170 M570,75 C640,70 700,90 760,130 C800,160 830,190 850,215 M600,300 C680,295 760,270 830,230 C880,205 950,195 1010,195 C1060,215 1120,245 1165,265 M685,190 L780,210 M805,125 L870,210 M840,125 L905,200 M560,250 C565,320 590,390 620,420 L650,430 C750,400 880,380 1000,350 C1080,320 1140,290 1175,265 M880,320 L960,355 M960,320 L1020,345 M895,355 L940,365 M650,430 C640,460 630,490 625,520 M625,520 C700,490 780,470 840,470 C900,480 960,500 1010,495 C1080,470 1130,420 1160,370 C1180,330 1190,290 1185,265 M930,440 L1030,430 M905,465 L1005,460 M985,420 L1060,405 M1030,395 L1065,400 M740,510 L870,505 M750,535 L850,525 M765,560 L830,555 M625,520 C610,560 620,600 640,630 C660,650 665,680 670,720 L680,760 C720,745 760,750 800,770 C830,790 870,805 920,790 L945,765 M705,700 C760,630 840,590 940,550 C1020,520 1090,490 1130,450 M945,765 C960,700 960,640 950,585 M950,585 C1000,620 1040,660 1055,705 M945,765 C990,790 1010,820 1040,825 L1060,840 L1090,820 C1120,810 1150,800 1165,790 M780,620 L790,665 M810,610 L815,670 M850,600 C850,650 845,700 830,740 M880,590 C880,650 870,710 850,750 M905,575 C905,640 895,700 875,745 M930,565 C930,620 920,680 900,720 M955,640 L940,700 M1165,790 C1170,700 1150,620 1120,560 C1100,520 1095,490 1100,470 M1120,560 C1150,570 1175,590 1190,615 M890,0 C950,50 1000,120 1030,190 M960,20 C1010,80 1050,150 1070,210 M1020,70 C1060,120 1090,180 1105,230 M1050,100 C1090,150 1110,200 1120,240 M1090,140 L1125,215 M1090,0 C1130,70 1160,150 1165,230 M1130,0 C1160,60 1180,120 1185,180 M1240,0 C1220,50 1200,130 1185,200 L1165,265 M1240,200 C1210,230 1190,250 1175,265"/>
</g>
<g transform="translate(395,560) scale(0.10731)" stroke-width="9.79">
<path d="M640,90 C700,60 760,40 800,40 C900,60 1000,100 1100,115 C1180,120 1240,100 1290,70 C1320,50 1340,30 1350,0 M660,110 C740,120 800,130 850,140 C950,170 1100,220 1250,270 C1300,290 1350,310 1398,325 M700,120 C800,125 900,160 1000,195 C1100,230 1250,280 1398,315 M865,50 L890,0 M640,90 C650,60 700,40 770,30 M650,50 L750,25 M1130,180 C1200,200 1280,225 1350,250 M1160,160 L1290,160 L1310,185 M640,100 C700,130 760,180 800,230 C815,260 810,290 800,300 C790,330 800,370 805,400 C800,440 780,470 760,490 L715,540 L640,525 L635,490 M635,490 C640,540 630,600 600,640 C580,655 555,655 540,650 C535,670 520,695 500,705 C470,695 445,675 430,650 M430,650 C420,690 410,720 405,745 C370,755 340,755 320,750 L300,700 M300,700 C295,720 290,740 285,755 C250,750 220,745 200,745 L190,720 L175,760 C120,775 60,770 10,745 L0,720 M30,230 C200,235 400,240 500,235 C560,250 680,275 790,300 M30,230 C100,180 200,130 330,90 C430,70 550,80 640,100 M20,210 C120,110 250,60 380,50 C470,50 560,60 640,90 M380,190 C450,150 540,125 640,120 M280,160 C360,165 440,160 520,140 M350,130 L500,125 M450,100 L560,110 M420,210 L520,235 M50,215 L110,130 M80,215 L140,115 M110,215 L170,105 M140,210 L200,95 M170,195 L225,90 M200,180 L250,85 M230,165 L280,80 M260,150 L305,80 M290,135 L330,80 M480,185 C530,200 570,225 600,250 M540,165 C590,190 630,220 660,255 M600,170 C650,200 690,235 720,270 M650,170 C700,200 740,240 770,285 M700,175 C730,200 760,230 780,260 M510,280 C550,310 580,350 600,400 M570,285 C610,320 640,360 660,410 M650,300 C680,340 700,390 710,440 M710,320 C740,350 770,390 790,430 M420,215 C460,220 490,230 520,245 M130,240 C230,280 350,330 460,400 M170,240 C260,270 360,310 450,350 M230,240 C300,260 380,290 440,320 M150,280 C240,320 340,380 440,430 C450,435 460,435 465,430 M330,250 C380,270 420,290 445,310 M240,360 L310,385 M30,230 C20,300 40,380 90,450 C120,500 150,550 170,600 M60,240 C60,310 90,380 140,450 C160,480 180,510 185,540 M90,245 C100,310 130,370 180,430 C200,450 210,440 205,420 M120,250 C135,300 160,350 200,400 M40,260 C30,330 50,400 100,480 C120,520 140,560 150,600 M10,300 C10,370 40,450 90,520 M0,400 C20,460 50,510 80,550 M185,540 L170,600 M205,420 C200,470 190,510 185,540 M150,250 C200,330 270,400 330,470 C380,540 420,600 430,650 M250,370 C310,430 360,500 390,570 M300,450 C340,510 380,570 400,630 M300,510 C330,560 360,610 380,670 M290,560 C320,610 350,660 370,720 M285,610 C310,660 335,700 350,745 M300,590 L340,650 M420,490 C440,540 470,600 490,660 M450,480 C470,540 500,600 520,650 M485,510 C505,550 525,590 540,630 M545,530 C560,550 570,575 570,595 M520,570 L530,640 M0,180 C40,120 100,60 170,20 L200,0 M40,60 L100,20 M50,100 L130,60 M20,0 L40,40 M170,20 C230,40 300,50 360,45 M220,0 C280,20 340,30 400,30 C440,20 480,10 520,0 M260,0 L300,25 M330,0 L370,25 M400,0 L430,20 M100,80 L170,40 M500,0 C520,30 550,50 590,60 L640,40 C640,20 650,10 660,0 M660,30 L760,10 M670,55 L770,30 M0,560 C20,570 35,580 40,595"/>
</g>
<g transform="translate(530,560) scale(0.10731)" stroke-width="9.79">
<path d="M1040,0 L1030,25 C1100,80 1170,150 1200,220 C1220,280 1215,340 1195,400 C1200,430 1195,460 1185,475 C1195,490 1170,510 1150,515 C1140,530 1140,550 1135,570 C1120,595 1090,600 1070,595 C1060,620 1050,640 1045,660 C1020,690 990,700 960,690 C930,670 900,650 880,645 C860,655 845,655 835,650 C815,625 795,600 775,575 C760,560 750,580 740,585 C700,590 660,560 630,510 C620,480 600,460 585,440 M635,215 C700,170 780,120 860,110 C920,110 990,130 1045,130 M635,215 C630,195 625,185 620,175 M865,65 L915,30 M880,80 L945,35 M905,85 L965,55 M860,160 C920,155 980,165 1035,185 M900,190 L975,200 M720,240 L745,240 M685,265 C740,250 790,255 825,260 M655,285 C740,270 820,280 880,310 M655,285 C680,315 695,345 705,375 M700,310 C720,320 740,340 750,360 M750,400 L780,440 M925,320 C970,390 1010,470 1050,550 M1035,335 C1070,350 1100,375 1115,395 M855,445 C890,465 920,510 925,570 M750,510 L790,580 M760,560 L785,575 M560,300 C555,270 570,235 600,225 C615,230 615,250 605,270 C595,295 575,310 560,300 M580,250 L575,290 M0,250 C100,300 250,320 400,310 C460,300 510,290 555,285 M0,270 C60,310 150,350 250,375 C350,390 450,400 520,410 C550,420 570,430 590,440 M420,265 C470,255 520,255 560,260 M430,285 L550,275 M450,300 L550,295 M20,230 L50,260 M60,230 L95,265 M100,230 L140,265 M140,225 L185,265 M180,220 L230,260 M220,215 L270,255 M250,215 L285,250 M0,215 C100,200 200,210 290,200 M200,310 L230,350 M240,315 L280,360 M280,318 L320,370 M320,320 L360,385 M140,320 L200,330 M430,380 L580,395 M450,375 L585,405 M480,370 L590,420 M520,340 L585,365 M510,360 L590,385 M500,330 L580,350 M540,400 L595,435 M130,0 C110,50 130,100 170,125 C220,145 280,135 320,100 C330,80 330,50 320,30 M0,100 C40,85 80,60 100,30 M0,140 C60,120 110,80 125,30 M20,110 L50,140 M40,95 L75,125 M60,80 L100,105 M75,55 L110,80 M90,35 L115,55 M145,30 L160,60 M155,20 L170,45 M30,150 L50,185 M70,145 L95,175 M95,140 L125,170 M0,200 C100,200 200,195 270,185 C300,160 310,140 310,120 M240,150 L260,165 M220,160 L240,175 M320,180 C350,210 390,250 420,270 M310,120 C350,95 400,90 450,110 C490,130 520,160 540,185 C570,190 600,185 620,175 M340,60 L520,0 M350,75 L560,5 M380,80 L580,15 M430,90 L590,40 M460,105 L600,65 M480,120 L610,90 M500,140 L620,115 M515,155 L630,135 M530,170 L635,160 M335,50 L300,0 M340,45 L330,0 M345,45 L360,0 M350,50 L400,0 M355,55 L450,0"/>
</g>
</g>
<path d="M442 455.500H482M461.500 456V476" stroke="#cfcfcf" stroke-width="1" fill="none"/>
<rect x="174.300" y="168" width="575.600" height="576" fill="none" stroke="#5a7ba4" stroke-width="1.800"/>
<g font-size="10" fill="#6a6a6a"><text x="457" y="151">8&quot;</text><text x="779" y="455">8&quot;</text></g>
<circle cx="159" cy="153" r="15" fill="#dc3c5a"/><path d="M154 148l10 10M164 148l-10 10" stroke="#fff" stroke-width="2.600"/>
<circle cx="765" cy="153" r="13.500" fill="#8aaedb" fill-opacity=".92"/><path d="M759.500 153.500a5.800 5.800 0 1 0 5.500-6" fill="none" stroke="#fff" stroke-width="2.400"/><path d="M765.500 143.500v8l-5.500-4z" fill="#fff"/>
<circle cx="159" cy="759" r="13.500" fill="#8aaedb" fill-opacity=".92"/><rect x="154" y="757" width="10" height="8" rx="1" fill="#fff"/><path d="M156 757v-2.500a3 3 0 0 1 6 0v2.500" fill="none" stroke="#fff" stroke-width="1.800"/>
<circle cx="765" cy="759" r="15" fill="#8aaedb" fill-opacity=".92"/><path d="M762 756l6 6" stroke="#fff" stroke-width="2"/><path d="M760 754h5.500l-5.500 5.500zM770.500 764.500h-5.500l5.500-5.500z" fill="#fff"/>
<rect x="98" y="812" width="89" height="38" rx="5" fill="#eeeeee" fill-opacity=".75"/>
<g fill="none" stroke="#d2d2d2" stroke-width="1"><circle cx="113" cy="832.500" r="9.500"/><circle cx="172" cy="832.500" r="9.500"/><path d="M108.500 832.500h9M167.500 832.500h9M172 828v9"/></g>
<text x="142.500" y="837" font-size="12" fill="#cfcfcf" text-anchor="middle">100%</text>
<rect x="1240" y="117" width="17" height="741" fill="#f1f1f1"/>
<rect x="88" y="858" width="1152" height="17" fill="#f1f1f1"/>
<rect x="70" y="858" width="18" height="18" fill="#f4f5f7"/>
<rect x="1240" y="858" width="17" height="17" fill="#dcdcdc"/>
<rect x="1242" y="134" width="13" height="121" fill="#c1c1c1"/>
<rect x="105" y="860" width="298" height="13" fill="#c1c1c1"/>
<path d="M1244.500 128.500h8l-4-4.500z" fill="#a3a3a3"/>
<path d="M1244.500 846h8l-4 4.500z" fill="#505050"/>
<path d="M98.500 862.500v8l-4.500-4z" fill="#505050"/>
<path d="M1229.500 862.500v8l4.500-4z" fill="#505050"/>
<path d="M70 875.500H1517" stroke="#555" stroke-width="1"/>
</svg>
<!-- RIGHT PANEL -->
<div id="rpanel" class="a"></div>
<div id="rp">
  <div class="a" style="left:1257px;top:49px;width:260px;height:67px;background:#e4e4e6"></div>
  <div class="t c" id="tx_layers" style="left:1322px;top:54px;font-size:11.5px;color:#4a545d">Layers</div>
  <div class="t c" id="tx_colorsync" style="left:1452px;top:54px;font-size:11.7px;color:#4a545d">Color Sync</div>
  <div class="a" style="left:1257px;top:70px;width:260px;height:1px;background:#c9c9cb"></div>
  <div class="a" style="left:1257px;top:69px;width:130px;height:2px;background:#4a545d"></div>
  <!-- group -->
  <svg class="a" style="left:1275px;top:76px" width="22" height="19" viewBox="0 0 22 19"><rect x="2.500" y="2.500" width="17" height="14" fill="none" stroke="#3a4249" stroke-width="1.300"/><rect x="5.500" y="5.500" width="7" height="5.500" fill="none" stroke="#3a4249" stroke-width="1.200"/><rect x="9.500" y="8.500" width="7" height="5.500" fill="#e4e4e6" stroke="#3a4249" stroke-width="1.200"/><g fill="#e4e4e6" stroke="#3a4249" stroke-width="1"><rect x="1" y="1" width="3" height="3"/><rect x="18" y="1" width="3" height="3"/><rect x="1" y="15" width="3" height="3"/><rect x="18" y="15" width="3" height="3"/></g></svg>
  <div class="t c" id="tx_group" style="left:1286px;top:99px;font-size:9.500px;color:#3a4249">Group</div>
  <!-- ungroup -->
  <svg class="a dim" style="left:1339px;top:76px" width="21" height="19" viewBox="0 0 21 19"><rect x="2.500" y="2.500" width="9" height="8" fill="none" stroke="#3a4249" stroke-width="1"/><rect x="8.500" y="7.500" width="9" height="9" fill="none" stroke="#3a4249" stroke-width="1"/><g fill="#e4e4e6" stroke="#3a4249" stroke-width="1"><rect x="1" y="1" width="3" height="3"/><rect x="10" y="1" width="3" height="3"/><rect x="1" y="9" width="3" height="3"/><rect x="16" y="6" width="3" height="3"/><rect x="7" y="15" width="3" height="3"/><rect x="16" y="15" width="3" height="3"/></g></svg>
  <div class="t c dim" id="tx_ungroup" style="left:1349px;top:99px;font-size:9.500px;color:#3a4249">UnGroup</div>
  <!-- duplicate -->
  <svg class="a" style="left:1412px;top:76px" width="19" height="19" viewBox="0 0 19 19"><rect x="1.500" y="1.500" width="11" height="13" fill="none" stroke="#3a4249" stroke-width="1.100"/><rect x="5.500" y="4.500" width="11" height="13" fill="#e4e4e6" stroke="#3a4249" stroke-width="1.100"/><path d="M11 7 l1.200 2.600 2.800 .3 -2.100 1.900 .6 2.800 -2.500 -1.400 -2.500 1.400 .6 -2.800 -2.100 -1.900 2.800 -.3z" fill="none" stroke="#3a4249" stroke-width="1"/></svg>
  <div class="t c" id="tx_duplicate" style="left:1421px;top:99px;font-size:9.5px;letter-spacing:.25px;color:#3a4249">Duplicate</div>
  <!-- delete -->
  <svg class="a" style="left:1479px;top:76px" width="17" height="19" viewBox="0 0 17 19"><path d="M1 3.500h15M6 3.500v-2h5v2" fill="none" stroke="#7a8188" stroke-width="1"/><path d="M2.500 3.500 l1 14 h10 l1 -14 M6 6.500v8M8.500 6.500v8M11 6.500v8" fill="none" stroke="#7a8188" stroke-width="1"/></svg>
  <div class="t c" id="tx_delete" style="left:1487px;top:99px;font-size:9.500px;color:#3a4249">Delete</div>
  <div class="a" style="left:1257px;top:116px;width:260px;height:1px;background:#bdbdbf"></div>
  <!-- layers list -->
  <div class="a" style="left:1257px;top:117px;width:243px;height:155px;background:#e4e4e6"></div>
  <div class="a" style="left:1500px;top:117px;width:17px;height:664px;background:#f1f1f1"></div>
  <svg class="a" style="left:1504px;top:122px" width="9" height="6" viewBox="0 0 9 6"><path d="M0 5.500h9L4.500 .5z" fill="#a3a3a3"/></svg>
  <svg class="a" style="left:1504px;top:769px" width="9" height="6" viewBox="0 0 9 6"><path d="M0 .5h9L4.500 5.500z" fill="#a3a3a3"/></svg>
  <!-- layer 1 -->
  <svg class="a" style="left:1267px;top:129px" width="8" height="5" viewBox="0 0 8 5"><path d="M0 0h8L4 5z" fill="#2d3338"/></svg>
  <div class="t" id="tx_flowers" style="left:1285px;top:124.7px;font-size:13.7px;color:#3a4249">Flowers and Leaves Draw</div>
  <svg class="a eye" style="left:1471px;top:126px" width="15" height="11" viewBox="0 0 15 11"><path d="M.7 5.500C3 1.800 5.500 1 7.500 1s4.500.8 6.800 4.500C12 9.200 9.500 10 7.500 10S3 9.200.7 5.500z" fill="#fff" stroke="#2d3338" stroke-width="1.300"/><circle cx="7.500" cy="5.300" r="3" fill="#2d3338"/><circle cx="6.600" cy="4.300" r=".9" fill="#fff"/></svg>
  <svg class="a" id="thumb1" style="left:1286px;top:153px" width="32" height="32" viewBox="250 250 420 420"><g opacity=".62"><use href="#flower"/><use href="#flower" x="1.5" y="1"/></g></svg>
  <div class="t" id="tx_eng1" style="left:1327px;top:163.7px;font-size:11.4px;color:#3a4249">Engrave</div>
  <div class="a" style="left:1257px;top:193px;width:243px;height:1px;background:#bdbdbf"></div>
  <!-- layer 2 -->
  <svg class="a" style="left:1267px;top:206px" width="8" height="5" viewBox="0 0 8 5"><path d="M0 0h8L4 5z" fill="#2d3338"/></svg>
  <div class="t" id="tx_square" style="left:1285px;top:201.7px;font-size:13.5px;color:#3a4249">Square</div>
  <svg class="a eye" style="left:1471px;top:203px" width="15" height="11" viewBox="0 0 15 11"><path d="M.7 5.500C3 1.800 5.500 1 7.500 1s4.500.8 6.800 4.500C12 9.200 9.500 10 7.500 10S3 9.200.7 5.500z" fill="#fff" stroke="#2d3338" stroke-width="1.300"/><circle cx="7.500" cy="5.300" r="3" fill="#2d3338"/><circle cx="6.600" cy="4.300" r=".9" fill="#fff"/></svg>
  <div class="a" style="left:1287px;top:231px;width:30px;height:30px;border:1px solid #cfcfd1"></div>
  <div class="t" id="tx_eng2" style="left:1327px;top:240.7px;font-size:11.4px;color:#3a4249">Engrave</div>
  <div class="a" style="left:1257px;top:271px;width:243px;height:1px;background:#bdbdbf"></div>
  <!-- blank canvas -->
  <div class="a" style="left:1257px;top:780px;width:260px;height:1px;background:#bdbdbf"></div>
  <div class="a" style="left:1267px;top:786px;width:53px;height:36px;background:#fff;border:1px solid #4a545d;border-radius:2px"></div>
  <div class="t" id="tx_blank" style="left:1340px;top:799px;font-size:9.7px;color:#3a4249">Blank Canvas</div>
  <svg class="a" style="left:1472px;top:797px" width="17" height="15" viewBox="0 0 17 15"><path d="M1 7.500C3.500 4 6 3 8.500 3s5 1 7.500 4.500C13.500 11 11 12 8.500 12S3.500 11 1 7.500z" fill="none" stroke="#4a545d" stroke-width="1.100"/><circle cx="8.500" cy="7.500" r="2.600" fill="none" stroke="#4a545d" stroke-width="1.100"/><path d="M3 1.500L15.500 14" stroke="#4a545d" stroke-width="1.100"/></svg>
  <!-- bottom actions -->
  <div class="a" style="left:1257px;top:829px;width:260px;height:46px;background:#e4e4e6"></div>
  <svg class="a" style="left:1270px;top:834px" width="20" height="19" viewBox="0 0 20 19"><path d="M1.500 11.500v-10h10v3" fill="none" stroke="#3a4249" stroke-width="1.100"/><path d="M4.500 14.500v-10h7" fill="none" stroke="#3a4249" stroke-width="1.100"/><circle cx="12.500" cy="11.500" r="5.500" fill="none" stroke="#3a4249" stroke-width="1.100"/><path d="M7 11.500a5.500 5.500 0 0 1 5.500-5.500v5.500z" fill="none" stroke="#3a4249" stroke-width="1"/></svg>
  <div class="t c" id="tx_slice" style="left:1280px;top:856px;font-size:9.8px;color:#3a4249">Slice</div>
  <svg class="a" style="left:1316px;top:834px" width="19" height="19" viewBox="0 0 19 19"><path d="M1.500 1.500h11v5.200a5.300 5.300 0 1 1-6.300 6.800H1.500z" fill="none" stroke="#3a4249" stroke-width="1.100" stroke-linejoin="round"/></svg>
  <div class="t c" id="tx_weld" style="left:1326px;top:856px;font-size:9.8px;color:#3a4249">Weld</div>
  <svg class="a" style="left:1366px;top:833px" width="19" height="20" viewBox="0 0 19 20"><path d="M13 16 L4 5.500 a2.800 2.800 0 0 1 4.300 -3.600 L16 11 a4 4 0 0 1 -6 5.200 L3 8" fill="none" stroke="#2d3338" stroke-width="1.300" stroke-linecap="round"/></svg>
  <div class="t c" id="tx_attach" style="left:1376px;top:856px;font-size:9.8px;letter-spacing:.35px;color:#3a4249">Attach</div>
  <svg class="a dim" style="left:1420px;top:833px" width="19" height="20" viewBox="0 0 19 20"><path d="M9.500 1v8M7 7l2.500 2.500L12 7" fill="none" stroke="#3a4249" stroke-width="1"/><path d="M1.500 11.500L9.500 7.500l8 4-8 4zM1.500 14.500l8 4 8-4" fill="none" stroke="#3a4249" stroke-width="1" stroke-linejoin="round"/></svg>
  <div class="t c dim" id="tx_flatten" style="left:1430px;top:856px;font-size:9.8px;color:#3a4249">Flatten</div>
  <svg class="a dim" style="left:1478px;top:835px" width="19" height="18" viewBox="0 0 19 18"><rect x=".5" y=".5" width="18" height="17" rx="1.500" fill="none" stroke="#3a4249" stroke-width="1"/><circle cx="9.500" cy="9" r="5" fill="none" stroke="#3a4249" stroke-width="1" stroke-dasharray="3 2.500"/></svg>
  <div class="t c dim" id="tx_contour" style="left:1487px;top:856px;font-size:9.8px;color:#3a4249">Contour</div>
</div>
<div class="a" style="left:0;top:875px;width:1517px;height:1px;background:#555"></div>
<!-- DROPDOWN + HIGHLIGHT -->
<div class="a" id="dd" style="left:165px;top:94px;width:92px;height:183px;background:#fff;border:1px solid #d9d9d9;border-radius:4px;box-shadow:0 1px 4px rgba(0,0,0,.25)">
  <div class="a" style="left:0;top:78px;width:90px;height:26px;background:#e4e4e6"></div>
  <div class="t" style="left:20px;top:6px;font-size:13.2px;color:#4a545d">Cut</div>
  <div class="t" style="left:20px;top:32px;font-size:13.2px;color:#4a545d">Draw</div>
  <div class="t" style="left:20px;top:58px;font-size:13.2px;color:#4a545d">Score</div>
  <div class="t" id="tx_dd_engrave" style="left:20px;top:84px;font-size:13.2px;color:#4a545d">Engrave</div>
  <div class="t" style="left:20px;top:110px;font-size:13.2px;color:#4a545d">Deboss</div>
  <div class="t" style="left:20px;top:136px;font-size:13.2px;color:#4a545d">Wave</div>
  <div class="t" style="left:20px;top:162px;font-size:13.2px;color:#4a545d">Perf</div>
</div>
<div class="a" id="redbox" style="left:152px;top:49px;width:119px;height:239px;border:3px solid #e8151f"></div>
</body>
</html>
